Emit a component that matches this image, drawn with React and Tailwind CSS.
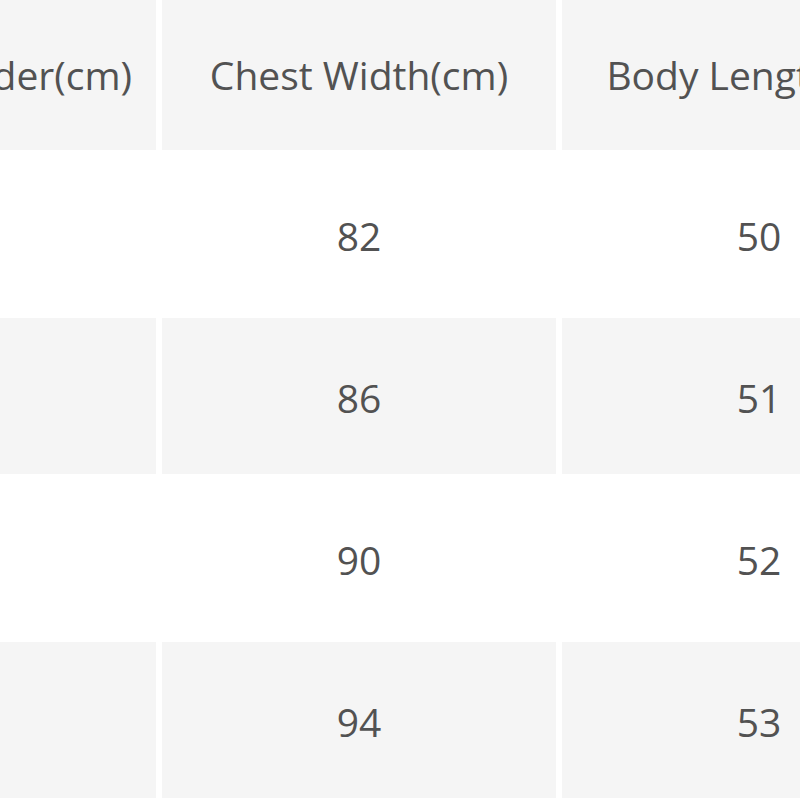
import React from "react";

const header = ["Across Shoulder(cm)", "Chest Width(cm)", "Body Length(cm)"];
const rows = [
  ["38", "82", "50"],
  ["39", "86", "51"],
  ["40", "90", "52"],
  ["41", "94", "53"],
];

export default function App() {
  return (
    <div className="w-[800px] h-[800px] overflow-hidden bg-white" style={{ fontFamily: '"Open Sans", sans-serif' }}>
      <div className="-ml-[264px] -mt-[6px] grid w-max grid-cols-[420px_394px_394px] gap-[6px] text-[39px] text-[#525252]">
        {header.map((h) => (
          <div key={h} className="flex h-[156px] items-center justify-center bg-[#f5f5f5] pt-[6px] whitespace-nowrap">
            {h}
          </div>
        ))}
        {rows.map((r, i) =>
          r.map((v, j) => (
            <div
              key={i + "-" + j}
              className={
                "flex h-[156px] items-center justify-center pt-[5px] " +
                (i % 2 === 1 ? "bg-[#f5f5f5]" : "bg-white")
              }
            >
              {v}
            </div>
          ))
        )}
      </div>
    </div>
  );
}
